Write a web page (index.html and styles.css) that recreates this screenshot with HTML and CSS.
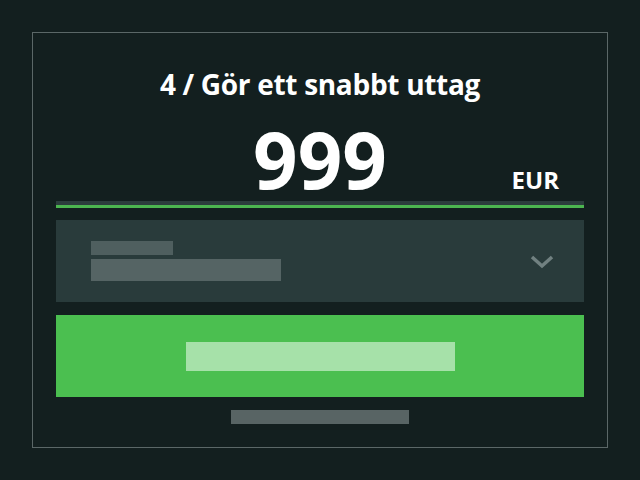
FILE: index.html
```html
<!DOCTYPE html>
<html lang="sv">
<head>
  <meta charset="UTF-8">
  <title>Snabbt uttag</title>
  <link rel="stylesheet" href="styles.css">
</head>
<body>
  <div class="card">
    <h1 class="title">4 / Gör ett snabbt uttag</h1>

    <div class="amount">
      <span></span>
      <span class="amount-value">999</span>
      <span class="amount-currency">EUR</span>
    </div>

    <div class="select">
      <div class="select-text">
        <div class="skel skel-label"></div>
        <div class="skel skel-value"></div>
      </div>
      <svg class="chevron" width="24" height="14" viewBox="0 0 24 14">
        <path d="M2 2 L12 11 L22 2" fill="none" stroke="#718181" stroke-width="3.5"/>
      </svg>
    </div>

    <div class="button">
      <div class="button-label"></div>
    </div>

    <div class="link"></div>
  </div>
</body>
</html>
```

FILE: styles.css
```css
body {
  margin: 0;
  background: #131f1f;
  font-family: "Open Sans", "Noto Sans", sans-serif;
  color: #fff;
}
.card {
  box-sizing: border-box;
  width: 576px;
  height: 416px;
  margin: 32px;
  padding: 0 23px;
  border: 1px solid #5b6767;
  display: flex;
  flex-direction: column;
}
.title {
  margin: 34px 0 0;
  font-size: 28px;
  font-weight: 700;
  line-height: 34px;
  letter-spacing: -0.3px;
  text-align: center;
}
.amount {
  display: grid;
  grid-template-columns: 1fr auto 1fr;
  align-items: baseline;
  height: 80px;
  margin-top: 20px;
  border-bottom: 4px solid #2c3d3d;
  position: relative;
}
.amount::after {
  content: "";
  position: absolute;
  left: 0;
  right: 0;
  bottom: -7px;
  height: 3px;
  background: #4cb550;
}
.amount-value {
  font-size: 78px;
  font-weight: 700;
  line-height: 76px;
}
.amount-currency {
  justify-self: end;
  padding-right: 25px;
  font-size: 24px;
  font-weight: 700;
}
.select {
  height: 82px;
  margin-top: 15px;
  background: #293b3b;
  display: flex;
  align-items: center;
  justify-content: space-between;
  padding: 0 30px 0 35px;
}
.select-text {
  display: flex;
  flex-direction: column;
  gap: 4px;
}
.skel {
  background: #4f5f5f;
}
.skel-label {
  width: 82px;
  height: 14px;
}
.skel-value {
  width: 190px;
  height: 22px;
  background: #556464;
}
.chevron {
  margin-top: 2px;
}
.button {
  height: 82px;
  margin-top: 13px;
  background: #4bbf50;
  display: flex;
  align-items: center;
  justify-content: center;
}
.button-label {
  width: 269px;
  height: 29px;
  background: #a6e1a9;
}
.link {
  align-self: center;
  width: 178px;
  height: 14px;
  margin-top: 13px;
  background: #586464;
}
```
